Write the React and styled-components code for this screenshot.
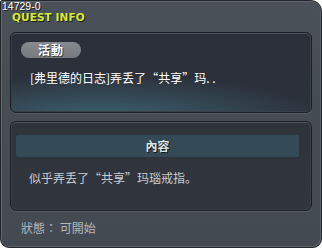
import React from "react";
import styled, { createGlobalStyle } from "styled-components";

const Global = createGlobalStyle`
  html, body { margin: 0; padding: 0; background: #ffffff; }
  body { font-family: "Noto Sans CJK SC", "Noto Sans CJK TC", sans-serif; }
`;

const Frame = styled.div`
  position: relative;
  box-sizing: border-box;
  width: 322px;
  height: 248px;
  background: linear-gradient(to bottom, #4a5159 0%, #454c54 40%, #434a52 100%);
  border: 1px solid #23272c;
  border-radius: 2px 11px 9px 9px;
  box-shadow: inset 1px 1px 0 #5f6871, inset -1px -1px 0 #5a636c;
  padding: 0 9px;
  display: flex;
  flex-direction: column;
  overflow: hidden;
`;

const IdLabel = styled.div`
  position: absolute;
  left: 1px;
  top: 0;
  font-family: "Liberation Sans", Arial, sans-serif;
  font-size: 10.5px;
  line-height: 10px;
  color: #ffffff;
  text-shadow: 1px 1px 0 #1c1f23;
`;

const Header = styled.div`
  height: 31px;
  box-sizing: border-box;
  padding: 11px 0 0 2px;
  flex: none;
`;

const Title = styled.div`
  font-family: "DejaVu Sans", sans-serif;
  font-weight: bold;
  font-size: 10.5px;
  line-height: 10px;
  letter-spacing: 0.1px;
  color: #d6ea36;
  text-shadow: 1px 1px 0 #1b1e12;
`;

const Panel = styled.div`
  box-sizing: border-box;
  height: ${(p) => p.$h}px;
  border: 1px solid #1c2026;
  border-radius: 6px;
  box-shadow: inset 0 1px 0 #4d565f, inset 0 0 0 1px #38414a, 0 1px 0 #555e67;
  background: ${(p) => p.$bg};
  display: flex;
  flex-direction: column;
  flex: none;
`;

const QuestPanel = styled(Panel)`
  padding: 9px 0 0 10px;
`;

const Pill = styled.div`
  width: 60px;
  height: 16px;
  border-radius: 8px;
  background: linear-gradient(to bottom, #878b8f, #767a7e);
  color: #ffffff;
  font-weight: bold;
  font-size: 12px;
  line-height: 16px;
  text-align: center;
  text-shadow: 1px 1px 0 #3a3d40;
  letter-spacing: 1px;
`;

const Wide = styled.span`
  font-feature-settings: "fwid" 1;
`;

const QuestText = styled.div`
  margin: 13px 0 0 9px;
  color: #ffffff;
  font-size: 12px;
  line-height: 14px;
  white-space: nowrap;
`;

const ContentPanel = styled(Panel)`
  margin-top: 8px;
  padding: 13px 12px 0 5px;
`;

const Bar = styled.div`
  height: 22px;
  border-radius: 2px;
  background: #344b57;
  color: #dce2e6;
  font-weight: bold;
  font-size: 12px;
  line-height: 22px;
  text-align: center;
  text-shadow: 1px 1px 0 #101418;
`;

const Body = styled.div`
  margin: 14px 0 0 13px;
  color: #c9cdd1;
  font-size: 12px;
  line-height: 14px;
  white-space: nowrap;
`;

const Status = styled.div`
  margin: 10px 0 0 11px;
  color: #b3b8bd;
  font-size: 12px;
  line-height: 14px;
`;

export default function App() {
  return (
    <>
      <Global />
      <Frame>
        <IdLabel>14729-0</IdLabel>
        <Header>
          <Title>QUEST INFO</Title>
        </Header>
        <QuestPanel
          $h={81}
          $bg="radial-gradient(ellipse 75% 60% at 30% 112%, #3e6371 0%, rgba(62,99,113,0) 100%), linear-gradient(to bottom, #2a2f39, #2c323c)"
        >
          <Pill>活動</Pill>
          <QuestText>
            [弗里德的日志]弄丢了<Wide>“</Wide>共享<Wide>”</Wide>玛. .
          </QuestText>
        </QuestPanel>
        <ContentPanel $h={90} $bg="linear-gradient(to bottom, #2e333c, #30353e)">
          <Bar>內容</Bar>
          <Body>
            似乎弄丢了<Wide>“</Wide>共享<Wide>”</Wide>玛瑙戒指。
          </Body>
        </ContentPanel>
        <Status>
          狀態<Wide>:</Wide> 可開始
        </Status>
      </Frame>
    </>
  );
}
